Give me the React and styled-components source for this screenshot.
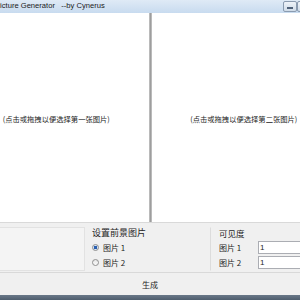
import React from 'react';
import styled, { createGlobalStyle } from 'styled-components';

const GlobalStyle = createGlobalStyle`
    html, body {
        margin: 0;
        padding: 0;
        background: #ffffff;
    }
    * {
        box-sizing: border-box;
    }
`;

const Viewport = styled.div`
    width: 300px;
    height: 300px;
    overflow: hidden;
    font-family: "Liberation Sans", "Noto Sans CJK SC", sans-serif;
    color: #1e1e1e;
`;

const Window = styled.div`
    width: 372px;
    margin-left: -36px;
    display: flex;
    flex-direction: column;
    height: 300px;
`;

const TitleBar = styled.div`
    height: 13px;
    display: flex;
    align-items: flex-start;
    background: linear-gradient(#dfeaf6, #c8dbef);
    padding-left: 31px;
`;

const Title = styled.span`
    font-size: 7.6px;
    line-height: 12px;
    white-space: pre;
    color: #1a1a1a;
`;

const Controls = styled.div`
    margin-left: auto;
    display: flex;
    padding-right: 1px;
`;

const CaptionButton = styled.div`
    width: ${props => props.wide ? '24px' : '14px'};
    height: 11px;
    margin-top: 1px;
    border: 1px solid #8a9bb0;
    border-radius: 2px;
    background: linear-gradient(#eef3f9, #cfdbe8);
    display: flex;
    align-items: center;
    justify-content: center;
`;

const MinGlyph = styled.div`
    width: 6px;
    height: 2px;
    margin-top: 3px;
    background: #ffffff;
    border: 1px solid #50627a;
`;

const Panels = styled.div`
    height: 209px;
    display: flex;
`;

const PicturePanel = styled.div`
    flex: 1;
    background: #ffffff;
    display: flex;
    align-items: center;
    justify-content: center;
    padding-top: 2px;
    font-family: "Noto Sans CJK SC", sans-serif;
    font-size: 7.3px;
    color: #222;
    white-space: nowrap;
`;

const Splitter = styled.div`
    width: 3px;
    background: linear-gradient(90deg, #c8c8c8, #9e9e9e, #c8c8c8);
`;

const Options = styled.div`
    height: 51px;
    background: #f0f0f0;
    border-top: 1px solid #d9d9d9;
    border-bottom: 1px solid #d9d9d9;
    display: grid;
    grid-template-columns: 121px 125px 1fr;
    padding: 4px 0 3px;
`;

const GroupBox = styled.div`
    border: 1px solid ${props => props.plain ? '#e2e2e2' : 'transparent'};
    border-left: ${props => props.divider ? '1px solid #dcdcdc' : ''};
    background: ${props => props.plain ? '#f4f4f4' : 'transparent'};
    padding: 0 0 0 ${props => props.indent || 6}px;
    display: flex;
    flex-direction: column;
    font-family: "Noto Sans CJK SC", sans-serif;
`;

const GroupLabel = styled.div`
    font-size: ${props => props.size || 8.5}px;
    line-height: 10px;
    margin-bottom: 2px;
    color: #1e1e1e;
`;

const RadioRow = styled.label`
    display: flex;
    align-items: center;
    gap: 4px;
    height: 15px;
    font-size: 8px;
    color: #1e1e1e;
`;

const RadioDot = styled.span`
    width: 7px;
    height: 7px;
    border-radius: 50%;
    border: 1px solid #8f8f8f;
    background: ${props => props.checked
        ? 'radial-gradient(circle, #2a5fb0 0 1.6px, #d8e4f2 2px)'
        : 'linear-gradient(#e6e6e6, #fafafa)'};
`;

const FieldRow = styled.div`
    display: flex;
    align-items: center;
    height: 14px;
    font-size: 8px;
    margin-bottom: 1px;
`;

const FieldName = styled.span`
    width: 39px;
`;

const Field = styled.div`
    flex: 1;
    height: 13px;
    background: #ffffff;
    border: 1px solid #abadb3;
    font-family: "Liberation Sans", sans-serif;
    font-size: 8px;
    line-height: 11px;
    padding-left: 1px;
`;

const ButtonRow = styled.div`
    height: 22px;
    background: #f0f0f0;
    display: flex;
    align-items: center;
    justify-content: center;
    font-family: "Noto Sans CJK SC", sans-serif;
    font-size: 8px;
    color: #1e1e1e;
`;

const Frame = styled.div`
    flex: 1;
    background: linear-gradient(#6a7888, #4f5e6e);
`;

export default function App() {
    return (
        <Viewport>
            <GlobalStyle />
            <Window>
                <TitleBar>
                    <Title>{'Picture Generator   --by Cynerus'}</Title>
                    <Controls>
                        <CaptionButton><MinGlyph /></CaptionButton>
                        <CaptionButton />
                        <CaptionButton wide />
                    </Controls>
                </TitleBar>
                <Panels>
                    <PicturePanel>(点击或拖拽以便选择第一张图片)</PicturePanel>
                    <Splitter />
                    <PicturePanel>(点击或拖拽以便选择第二张图片)</PicturePanel>
                </Panels>
                <Options>
                    <GroupBox plain />
                    <GroupBox indent={6}>
                        <GroupLabel size={9}>设置前景图片</GroupLabel>
                        <RadioRow><RadioDot checked />图片 1</RadioRow>
                        <RadioRow><RadioDot />图片 2</RadioRow>
                    </GroupBox>
                    <GroupBox divider indent={8}>
                        <GroupLabel>可见度</GroupLabel>
                        <FieldRow><FieldName>图片 1</FieldName><Field>1</Field></FieldRow>
                        <FieldRow><FieldName>图片 2</FieldName><Field>1</Field></FieldRow>
                    </GroupBox>
                </Options>
                <ButtonRow>生成</ButtonRow>
                <Frame />
            </Window>
        </Viewport>
    );
}
